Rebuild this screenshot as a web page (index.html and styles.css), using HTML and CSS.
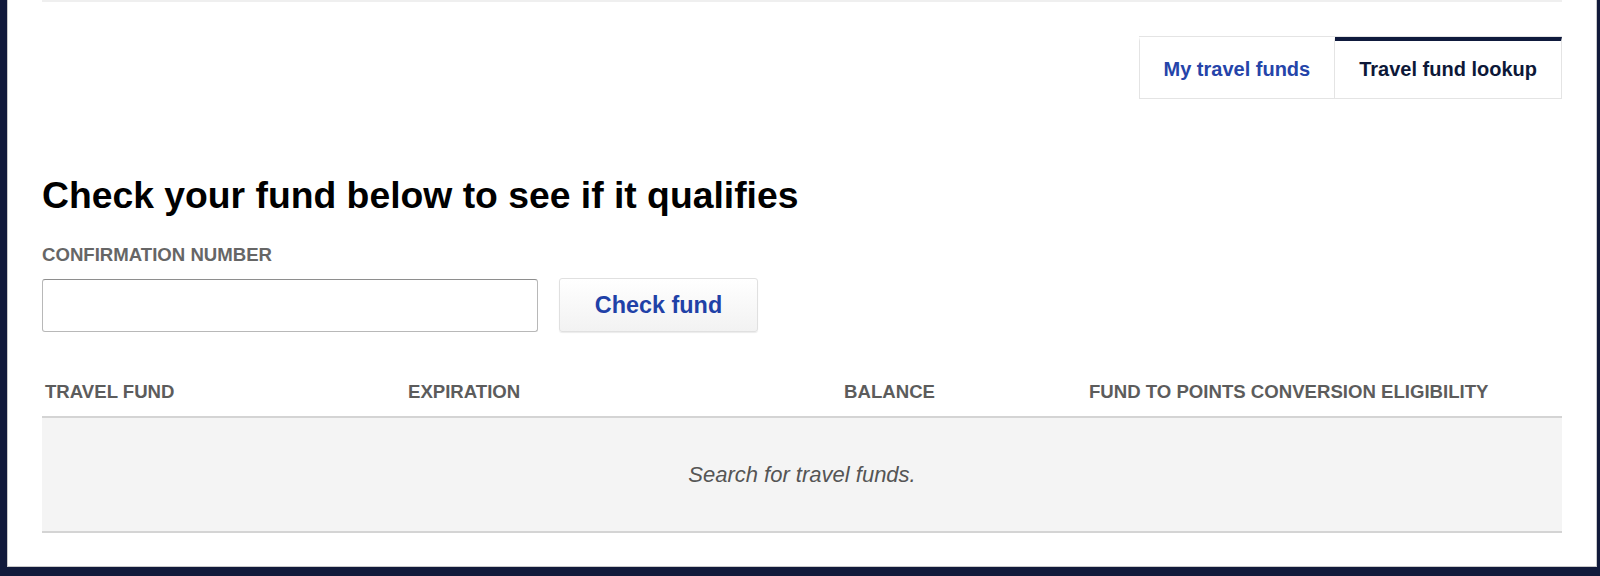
FILE: index.html
```html
<!DOCTYPE html>
<html lang="en">
<head>
    <meta charset="UTF-8">
    <meta name="viewport" content="width=device-width, initial-scale=1.0">
    <title>Travel fund lookup</title>
    <link rel="stylesheet" href="styles.css">
</head>
<body>

    <!-- Page Panel -->
    <div class="panel">
        <div class="top-rule"></div>

        <!-- Tabs -->
        <div class="tabs">
            <a href="#" class="tab">My travel funds</a>
            <a href="#" class="tab tab-active">Travel fund lookup</a>
        </div>

        <!-- Lookup Form -->
        <h1 class="title">Check your fund below to see if it qualifies</h1>
        <label class="field-label" for="confirmation">CONFIRMATION NUMBER</label>
        <div class="lookup-row">
            <input type="text" id="confirmation" class="lookup-input">
            <button class="lookup-btn">Check fund</button>
        </div>

        <!-- Results Table -->
        <div class="funds-table">
            <div class="funds-head">
                <div class="col">TRAVEL FUND</div>
                <div class="col">EXPIRATION</div>
                <div class="col col-balance">BALANCE</div>
                <div class="col col-eligibility">FUND TO POINTS CONVERSION ELIGIBILITY</div>
            </div>
            <div class="funds-empty">Search for travel funds.</div>
        </div>
    </div>

</body>
</html>
```

FILE: styles.css
```css
/* General Styles */
body {
    margin: 0;
    padding: 0;
    height: 576px;
    overflow: hidden;
    background-color: #111a3b;
    font-family: "Liberation Sans", Arial, sans-serif;
}

/* White Panel */
.panel {
    margin: 0 3px 0 7px;
    height: 566px;
    padding: 0 34px;
    background: white;
    border-left: 1px solid #c9c9c9;
    border-right: 1px solid #c9c9c9;
    border-bottom: 1px solid #c9c9c9;
}

.top-rule {
    height: 2px;
    background: #efefef;
}

/* Tabs */
.tabs {
    display: flex;
    justify-content: flex-end;
    margin-top: 34px;
}

.tab {
    display: block;
    padding: 18px 24px;
    line-height: 21px;
    font-size: 20px;
    font-weight: bold;
    color: #2544a9;
    text-decoration: none;
    border: 1px solid #e4e4e4;
    border-top: 4px solid white;
    box-shadow: 0 -1px 0 #e4e4e4;
    margin-top: 1px;
}

.tab + .tab {
    border-left: none;
}

.tab-active {
    color: #0d1838;
    border-top-color: #0f1a3d;
}

/* Heading and Label */
.title {
    margin: 74px 0 0;
    font-size: 37.3px;
    line-height: 44px;
    font-weight: bold;
    color: #000;
}

.field-label {
    display: block;
    margin-top: 27px;
    font-size: 18.6px;
    line-height: 22px;
    font-weight: bold;
    color: #666;
}

/* Input Row */
.lookup-row {
    display: flex;
    align-items: flex-start;
    gap: 21px;
    margin-top: 12px;
}

.lookup-input {
    width: 496px;
    height: 53px;
    box-sizing: border-box;
    margin: 1px 0 0;
    padding: 0 12px;
    border: 1px solid #b8b8b8;
    border-top-color: #8e8e8e;
    border-radius: 3px;
    font-family: inherit;
    font-size: 18px;
}

.lookup-btn {
    width: 199px;
    height: 54px;
    box-sizing: border-box;
    border: 1px solid #e0e0e0;
    border-radius: 3px;
    background: linear-gradient(#ffffff, #f2f2f2);
    box-shadow: 0 1px 1px rgba(0, 0, 0, 0.08);
    color: #1f41a7;
    font-family: inherit;
    font-size: 23.4px;
    font-weight: bold;
    cursor: pointer;
}

/* Results Table */
.funds-table {
    margin-top: 37px;
}

.funds-head {
    display: grid;
    grid-template-columns: 363px 340px 193px 1fr;
    padding: 12px 0 13px;
    border-bottom: 2px solid #d4d4d4;
}

.col {
    padding: 0 3px;
    font-size: 18.6px;
    line-height: 22px;
    font-weight: bold;
    color: #5c5c5c;
    white-space: nowrap;
}

.col-balance {
    text-align: right;
}

.col-eligibility {
    padding-left: 151px;
}

.funds-empty {
    height: 113px;
    display: flex;
    align-items: center;
    justify-content: center;
    background: #f4f4f4;
    border-bottom: 2px solid #d4d4d4;
    font-size: 22px;
    font-style: italic;
    color: #555;
}
```
